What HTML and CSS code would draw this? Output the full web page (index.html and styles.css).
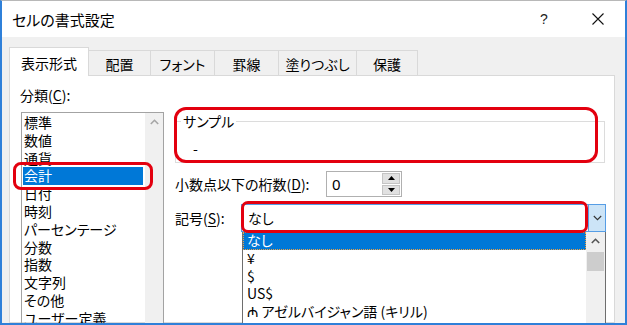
FILE: index.html
```html
<!DOCTYPE html>
<html lang="ja">
<head>
  <meta charset="UTF-8" />
  <title>セルの書式設定</title>
  <link rel="stylesheet" href="styles.css">
</head>
<body>
  <div class="window">
    <div class="titlebar">
      <span class="title">セルの書式設定</span>
      <span class="help">?</span>
      <span class="close">
        <svg width="12" height="12" viewBox="0 0 12 12"><path d="M0.5 0.5L11.5 11.5M11.5 0.5L0.5 11.5" stroke="#111" stroke-width="1.1" fill="none"/></svg>
      </span>
    </div>

    <div class="dialog">
      <div class="tabs">
        <div class="tab tab-format active">表示形式</div>
        <div class="tab tab-align">配置</div>
        <div class="tab tab-font">フォント</div>
        <div class="tab tab-border">罫線</div>
        <div class="tab tab-fill">塗りつぶし</div>
        <div class="tab tab-protect">保護</div>
      </div>

      <div class="panel">
        <div class="category">
          <div class="label">分類(<u>C</u>):</div>
          <div class="listbox">
            <div class="items">
              <div class="item">標準</div>
              <div class="item">数値</div>
              <div class="item">通貨</div>
              <div class="item selected">会計</div>
              <div class="item">日付</div>
              <div class="item">時刻</div>
              <div class="item">パーセンテージ</div>
              <div class="item">分数</div>
              <div class="item">指数</div>
              <div class="item">文字列</div>
              <div class="item">その他</div>
              <div class="item">ユーザー定義</div>
            </div>
            <div class="scrollbar">
              <div class="scroll-up">
                <svg width="9" height="6" viewBox="0 0 9 6"><path d="M0.8 5L4.5 1.3L8.2 5" stroke="#a6a6a6" stroke-width="1.6" fill="none"/></svg>
              </div>
            </div>
          </div>
        </div>

        <div class="format">
          <div class="sample-wrap">
            <fieldset class="sample">
              <legend>サンプル</legend>
              <div class="sample-value">-</div>
            </fieldset>
          </div>

          <div class="row decimals">
            <label class="row-label decimals-label">小数点以下の桁数(<u>D</u>):</label>
            <div class="spin">
              <span class="spin-value">0</span>
              <div class="spin-buttons">
                <div class="spin-btn"><svg width="7" height="4" viewBox="0 0 7 4"><path d="M0 4L3.5 0L7 4Z" fill="#000"/></svg></div>
                <div class="spin-btn"><svg width="7" height="4" viewBox="0 0 7 4"><path d="M0 0L7 0L3.5 4Z" fill="#000"/></svg></div>
              </div>
            </div>
          </div>

          <div class="row symbol">
            <label class="row-label symbol-label">記号(<u>S</u>):</label>
            <div class="combo-wrap">
              <div class="combo">
                <div class="combo-field">なし</div>
                <div class="combo-button">
                  <svg width="9" height="6" viewBox="0 0 9 6"><path d="M0.8 1L4.5 4.7L8.2 1" stroke="#333" stroke-width="1.1" fill="none"/></svg>
                </div>
              </div>
              <div class="dropdown">
                <div class="options">
                  <div class="option focused">なし</div>
                  <div class="option">¥</div>
                  <div class="option">$</div>
                  <div class="option">US$</div>
                  <div class="option">₼ アゼルバイジャン語 (キリル)</div>
                  <div class="option">₼ アゼルバイジャン語 (ラテン)</div>
                </div>
                <div class="scrollbar dropdown-scroll">
                  <div class="scroll-up">
                    <svg width="9" height="6" viewBox="0 0 9 6"><path d="M0.8 5L4.5 1.3L8.2 5" stroke="#555" stroke-width="1.6" fill="none"/></svg>
                  </div>
                  <div class="thumb"></div>
                </div>
              </div>
            </div>
          </div>
        </div>
      </div>
    </div>
  </div>
</body>
</html>
```

FILE: styles.css
```css
* {
  box-sizing: border-box;
}
body {
  margin: 0;
  font-family: "Noto Sans CJK JP", "Noto Sans", "DejaVu Sans", sans-serif;
  font-size: 14px;
  font-feature-settings: "palt";
  color: #000;
}
u {
  text-underline-offset: 2px;
}
.window {
  width: 627px;
  height: 325px;
  display: flex;
  flex-direction: column;
  border: 2px solid #2f80d9;
  border-top: 1px solid #b8b8b8;
  background: #f0f0f0;
  overflow: hidden;
}

/* title bar */
.titlebar {
  height: 36px;
  flex: none;
  display: flex;
  align-items: center;
  background: #fff;
  padding-left: 10px;
}
.title {
  flex: 1;
  font-size: 15px;
}
.help {
  width: 10px;
  text-align: center;
  margin-right: 43px;
  font-size: 14px;
  font-family: "Liberation Sans", sans-serif;
  color: #222;
}
.close {
  width: 12px;
  height: 12px;
  margin-right: 21px;
  display: flex;
}

/* tabs */
.dialog {
  flex: 1;
  min-height: 0;
  display: flex;
  flex-direction: column;
  padding: 10px 0 0 7px;
}
.tabs {
  height: 28px;
  flex: none;
  display: flex;
  align-items: flex-end;
}
.tab {
  height: 25px;
  display: flex;
  align-items: center;
  justify-content: center;
  border: 1px solid #d9d9d9;
  border-left: none;
  border-bottom: none;
  padding-top: 1px;
}
.tab.active {
  height: 29px;
  margin-bottom: -1px;
  border-left: 1px solid #d9d9d9;
  background: #fff;
  position: relative;
  z-index: 1;
}
.tab-format { width: 80px; }
.tab-align { width: 62px; }
.tab-font { width: 64px; }
.tab-border { width: 64px; }
.tab-fill { width: 78px; }
.tab-protect { width: 61px; }

.panel {
  flex: 1;
  min-height: 0;
  margin-right: 10px;
  display: flex;
  padding: 10px 0 0 10px;
  background: #fff;
  border: 1px solid #d9d9d9;
}

/* category list */
.category {
  width: 144px;
  display: flex;
  flex-direction: column;
}
.label {
  height: 18px;
  line-height: 18px;
  margin-bottom: 8px;
}
.listbox {
  flex: 1;
  width: 143px;
  margin-left: 1px;
  display: flex;
  padding: 1px 0 0 1px;
  border: 1px solid #a3a3a3;
}
.items {
  width: 120px;
}
.item {
  height: 17.8px;
  line-height: 17.8px;
  padding-left: 1px;
  white-space: nowrap;
  position: relative;
}
.item.selected {
  background: #0078d7;
  color: #fff;
}
.item.selected::after {
  content: "";
  position: absolute;
  top: -5px;
  bottom: -5px;
  left: -10px;
  right: -10px;
  border: 3px solid #e3000f;
  border-radius: 8px;
  z-index: 2;
}
.scrollbar {
  width: 18px;
  margin-left: auto;
  margin-top: -1px;
  background: #f0f0f0;
}
.scroll-up {
  height: 18px;
  display: flex;
  align-items: center;
  justify-content: center;
}

/* format options */
.format {
  width: 431px;
  margin-left: 11px;
  padding-top: 27px;
  display: flex;
  flex-direction: column;
}
.sample-wrap {
  position: relative;
}
.sample-wrap::after {
  content: "";
  position: absolute;
  top: -6px;
  bottom: 0;
  left: -1px;
  right: 8px;
  border: 3px solid #e3000f;
  border-radius: 12px;
}
.sample {
  width: 430px;
  margin: 0;
  padding: 0 5px 5px;
  border: 1px solid #dcdcdc;
}
.sample legend {
  padding: 0 2px;
  line-height: 17px;
}
.sample-value {
  margin: 9px 0 0 12px;
  line-height: 18px;
}
.row {
  display: flex;
}
.row-label {
  flex: none;
  height: 26px;
  line-height: 26px;
}
.decimals {
  margin-top: 8px;
  align-items: center;
}
.decimals-label {
  width: 151px;
}
.spin {
  width: 76px;
  height: 26px;
  display: flex;
  align-items: center;
  padding: 1px 1px 1px 5px;
  border: 1px solid #b0b0b0;
}
.spin-value {
  flex: 1;
  font-family: "Noto Sans", sans-serif;
  font-size: 15px;
}
.spin-buttons {
  width: 18px;
  height: 22px;
  display: flex;
  flex-direction: column;
  gap: 1px;
}
.spin-btn {
  flex: 1;
  display: flex;
  align-items: center;
  justify-content: center;
  background: #e1e1e1;
  border: 1px solid #c4c4c4;
}

/* symbol combo */
.symbol {
  flex: 1;
  min-height: 0;
  margin-top: 7px;
  align-items: flex-start;
  height: 100%;
}
.symbol-label {
  width: 66px;
  height: 28px;
  line-height: 28px;
}
.combo-wrap {
  width: 365px;
  height: 100%;
  display: flex;
  flex-direction: column;
}
.combo {
  height: 28px;
  flex: none;
  display: flex;
}
.combo-field {
  flex: 1;
  position: relative;
  padding-left: 6px;
  line-height: 26px;
  border: 1px solid #569de5;
  border-right: none;
}
.combo-field::after {
  content: "";
  position: absolute;
  top: -4px;
  bottom: -2px;
  left: -1px;
  right: 0;
  border: 3px solid #e3000f;
  border-radius: 7px;
}
.combo-button {
  width: 18px;
  display: flex;
  align-items: center;
  justify-content: center;
  background: #cce4f7;
  border: 1px solid #569de5;
}
.dropdown {
  flex: 1;
  width: 364px;
  margin-left: 1px;
  display: flex;
  background: #fff;
  border: 1px solid #6e6e6e;
  border-top: none;
}
.options {
  width: 343px;
}
.option {
  height: 17.8px;
  line-height: 17.8px;
  padding-left: 4px;
  white-space: nowrap;
}
.option.focused {
  background: #0078d7;
  color: #fff;
  outline: 1px dotted #f0a040;
  outline-offset: -1px;
}
.dropdown-scroll {
  width: 19px;
  margin-top: 0;
}
.thumb {
  height: 19px;
  margin: 2px 1px 0;
  background: #cdcdcd;
}
```
